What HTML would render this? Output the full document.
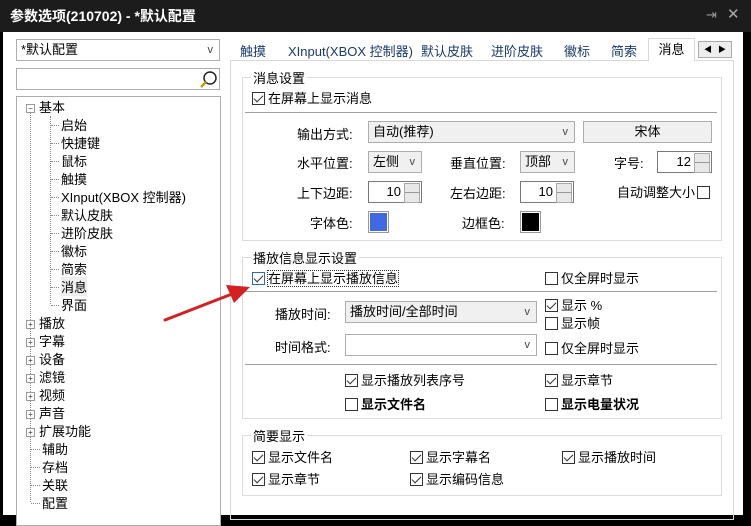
<!DOCTYPE html>
<html><head><meta charset="utf-8"><style>
*{box-sizing:border-box;margin:0;padding:0}
body{width:751px;height:515px;background:#000;position:relative;overflow:hidden;font-family:"Liberation Sans","Noto Sans CJK SC",sans-serif;font-size:13px;color:#000}
.a{position:absolute;white-space:nowrap}
.box{position:absolute;border:1px solid #adadad;background:#fff}
.grp{position:absolute;border:1px solid #dcdcdc}
.gt{position:absolute;background:#fff;padding:0 2px;top:-10px;left:8px;font-size:13px}
.cb{display:inline-block;width:13px;height:13px;border:1px solid #333;vertical-align:-2px;margin-right:3px;position:relative;background:#fff}
.cb.c::after{content:"";position:absolute;left:3px;top:0px;width:4px;height:8px;border:solid #333;border-width:0 1.5px 1.5px 0;transform:rotate(45deg)}
.cmb{position:absolute;border:1px solid #adadad;background:#f0f0f0;padding-left:4px;line-height:20px;font-size:13px}
.cmb .v{position:absolute;right:6px;top:0;font-size:11px;color:#444}
.spin{position:absolute;border:1px solid #7a7a7a;background:#fff;text-align:right;padding-right:20px;line-height:20px}
.spin::after{content:"";position:absolute;right:1px;top:1px;width:14px;height:18px;background:linear-gradient(#e8e8e8 0 8px,#999 8px 9px,#e8e8e8 9px);border:1px solid #aaa}
.sep{position:absolute;height:1px;background:#a0a0a0}
.tree div{position:absolute;white-space:nowrap;font-size:13px}
.pl{display:inline-block;width:9px;height:9px;border:1px solid #999;font-size:8px;line-height:7px;text-align:center;color:#333;margin-right:4px;vertical-align:1px;background:#fff}
.vd{position:absolute;border-left:1px dotted #888;width:0}
.hd{position:absolute;border-top:1px dotted #888;height:0}
</style></head><body>
<div class="a" style="left:0;top:0;width:751px;height:32px;background:#1c1c1c"></div>
<div class="a" style="left:10px;top:6px;color:#fff;font-size:14px;font-weight:bold">参数选项(210702) - *默认配置</div>
<div class="a" style="left:706px;top:7px;color:#999;font-size:13px">⇥</div>
<div class="a" style="left:727px;top:5px;color:#aaa;font-size:15px">✕</div>
<div class="a" style="left:3px;top:32px;width:740px;height:483px;background:#fff"></div>

<div class="cmb" style="left:16px;top:39px;width:204px;height:22px;background:#fff">*默认配置<span class="v">v</span></div>
<div class="box" style="left:16px;top:68px;width:204px;height:22px"></div>
<svg class="a" style="left:199px;top:70px" width="19" height="19"><circle cx="11" cy="8" r="6" fill="none" stroke="#222" stroke-width="1.5"/><line x1="7" y1="12" x2="2" y2="17" stroke="#b8a000" stroke-width="2.5"/></svg>
<div class="box" style="left:16px;top:96px;width:205px;height:430px"></div>
<div class="vd" style="left:30px;top:112px;height:390px"></div>
<div class="vd" style="left:50px;top:116px;height:188px"></div>
<div class="hd" style="left:51px;top:125px;width:8px"></div><div class="hd" style="left:51px;top:143px;width:8px"></div><div class="hd" style="left:51px;top:161px;width:8px"></div><div class="hd" style="left:51px;top:179px;width:8px"></div><div class="hd" style="left:51px;top:197px;width:8px"></div><div class="hd" style="left:51px;top:215px;width:8px"></div><div class="hd" style="left:51px;top:233px;width:8px"></div><div class="hd" style="left:51px;top:251px;width:8px"></div><div class="hd" style="left:51px;top:269px;width:8px"></div><div class="hd" style="left:51px;top:287px;width:8px"></div><div class="hd" style="left:51px;top:305px;width:8px"></div>
<div class="hd" style="left:31px;top:449px;width:9px"></div><div class="hd" style="left:31px;top:467px;width:9px"></div><div class="hd" style="left:31px;top:485px;width:9px"></div><div class="hd" style="left:31px;top:503px;width:9px"></div>
<div class="tree">
<div style="left:26px;top:97px"><span class="pl">−</span>基本</div>
<div style="left:61px;top:115px">启始</div><div style="left:61px;top:133px">快捷键</div><div style="left:61px;top:151px">鼠标</div><div style="left:61px;top:169px">触摸</div><div style="left:61px;top:187px">XInput(XBOX 控制器)</div><div style="left:61px;top:205px">默认皮肤</div><div style="left:61px;top:223px">进阶皮肤</div><div style="left:61px;top:241px">徽标</div><div style="left:61px;top:259px">简索</div><div style="left:61px;top:277px;background:#eee">消息</div><div style="left:61px;top:295px">界面</div>
<div style="left:26px;top:313px"><span class="pl">+</span>播放</div><div style="left:26px;top:331px"><span class="pl">+</span>字幕</div><div style="left:26px;top:349px"><span class="pl">+</span>设备</div><div style="left:26px;top:367px"><span class="pl">+</span>滤镜</div><div style="left:26px;top:385px"><span class="pl">+</span>视频</div><div style="left:26px;top:403px"><span class="pl">+</span>声音</div><div style="left:26px;top:421px"><span class="pl">+</span>扩展功能</div>
<div style="left:42px;top:439px">辅助</div><div style="left:42px;top:457px">存档</div><div style="left:42px;top:475px">关联</div><div style="left:42px;top:493px">配置</div>
</div>

<div class="a" style="left:230px;top:60px;width:504px;height:460px;border:1px solid #d9d9d9"></div>
<div class="a" style="left:240px;top:41px;color:#1a3a6a">触摸</div>
<div class="a" style="left:288px;top:41px;color:#1a3a6a">XInput(XBOX 控制器)</div>
<div class="a" style="left:421px;top:41px;color:#1a3a6a">默认皮肤</div>
<div class="a" style="left:491px;top:41px;color:#1a3a6a">进阶皮肤</div>
<div class="a" style="left:564px;top:41px;color:#1a3a6a">徽标</div>
<div class="a" style="left:611px;top:41px;color:#1a3a6a">简索</div>
<div class="a" style="left:648px;top:38px;width:47px;height:23px;border:1px solid #d9d9d9;border-bottom:none;background:#fff;text-align:center;line-height:22px">消息</div>
<div class="a" style="left:698px;top:41px;width:34px;height:17px;border:1px solid #aaa;background:#eee;font-size:8px;line-height:15px;letter-spacing:6px;padding-left:5px">◀▶</div>

<div class="grp" style="left:242px;top:77px;width:480px;height:164px"><span class="gt">消息设置</span></div>
<div class="a" style="left:252px;top:88px"><span class="cb c"></span>在屏幕上显示消息</div>
<div class="sep" style="left:245px;top:112px;width:472px"></div>
<div class="a" style="left:297px;top:124px">输出方式:</div>
<div class="cmb" style="left:368px;top:121px;width:207px;height:22px">自动(推荐)<span class="v">v</span></div>
<div class="cmb" style="left:583px;top:121px;width:129px;height:22px;text-align:center;padding:0">宋体</div>
<div class="a" style="left:297px;top:153px">水平位置:</div>
<div class="cmb" style="left:368px;top:151px;width:54px;height:22px">左侧<span class="v">v</span></div>
<div class="a" style="left:450px;top:153px">垂直位置:</div>
<div class="cmb" style="left:520px;top:151px;width:55px;height:22px">顶部<span class="v">v</span></div>
<div class="a" style="left:614px;top:153px">字号:</div>
<div class="spin" style="left:657px;top:151px;width:55px;height:22px">12</div>
<div class="a" style="left:297px;top:183px">上下边距:</div>
<div class="spin" style="left:368px;top:181px;width:54px;height:22px">10</div>
<div class="a" style="left:450px;top:183px">左右边距:</div>
<div class="spin" style="left:520px;top:181px;width:54px;height:22px">10</div>
<div class="a" style="left:617px;top:182px">自动调整大小<span class="cb" style="margin-left:2px"></span></div>
<div class="a" style="left:310px;top:213px">字体色:</div>
<div class="a" style="left:368px;top:211px;width:21px;height:22px;border:1px solid #999;background:#4169e1;box-shadow:inset 0 0 0 1px #fff"></div>
<div class="a" style="left:462px;top:213px">边框色:</div>
<div class="a" style="left:520px;top:211px;width:21px;height:22px;border:1px solid #999;background:#000;box-shadow:inset 0 0 0 1px #fff"></div>

<div class="grp" style="left:242px;top:257px;width:480px;height:162px"><span class="gt">播放信息显示设置</span></div>
<div class="a" style="left:252px;top:268px"><span class="cb c" style="border-color:#2a6cc0"></span><span style="outline:1px dotted #333">在屏幕上显示播放信息</span></div>
<div class="a" style="left:545px;top:268px"><span class="cb"></span>仅全屏时显示</div>
<div class="sep" style="left:245px;top:291px;width:472px"></div>
<div class="a" style="left:275px;top:304px">播放时间:</div>
<div class="cmb" style="left:345px;top:301px;width:192px;height:22px">播放时间/全部时间<span class="v">v</span></div>
<div class="a" style="left:545px;top:295px"><span class="cb c"></span>显示 %</div>
<div class="a" style="left:545px;top:313px"><span class="cb"></span>显示帧</div>
<div class="a" style="left:275px;top:337px">时间格式:</div>
<div class="cmb" style="left:345px;top:334px;width:192px;height:22px;background:#fff"><span class="v">v</span></div>
<div class="a" style="left:545px;top:338px"><span class="cb"></span>仅全屏时显示</div>
<div class="sep" style="left:245px;top:364px;width:472px"></div>
<div class="a" style="left:345px;top:370px"><span class="cb c"></span>显示播放列表序号</div>
<div class="a" style="left:545px;top:370px"><span class="cb c"></span>显示章节</div>
<div class="a" style="left:345px;top:394px;font-weight:bold"><span class="cb"></span>显示文件名</div>
<div class="a" style="left:545px;top:394px;font-weight:bold"><span class="cb"></span>显示电量状况</div>

<div class="grp" style="left:242px;top:435px;width:480px;height:61px"><span class="gt">简要显示</span></div>
<div class="a" style="left:252px;top:447px"><span class="cb c"></span>显示文件名</div>
<div class="a" style="left:410px;top:447px"><span class="cb c"></span>显示字幕名</div>
<div class="a" style="left:562px;top:447px"><span class="cb c"></span>显示播放时间</div>
<div class="a" style="left:252px;top:469px"><span class="cb c"></span>显示章节</div>
<div class="a" style="left:410px;top:469px"><span class="cb c"></span>显示编码信息</div>

<svg class="a" style="left:0;top:0" width="751" height="515"><line x1="165" y1="320" x2="232" y2="294" stroke="#d42020" stroke-width="3" stroke-linecap="round"/><polygon points="250,287 226,285 234,303" fill="#d42020"/></svg>
</body></html>
